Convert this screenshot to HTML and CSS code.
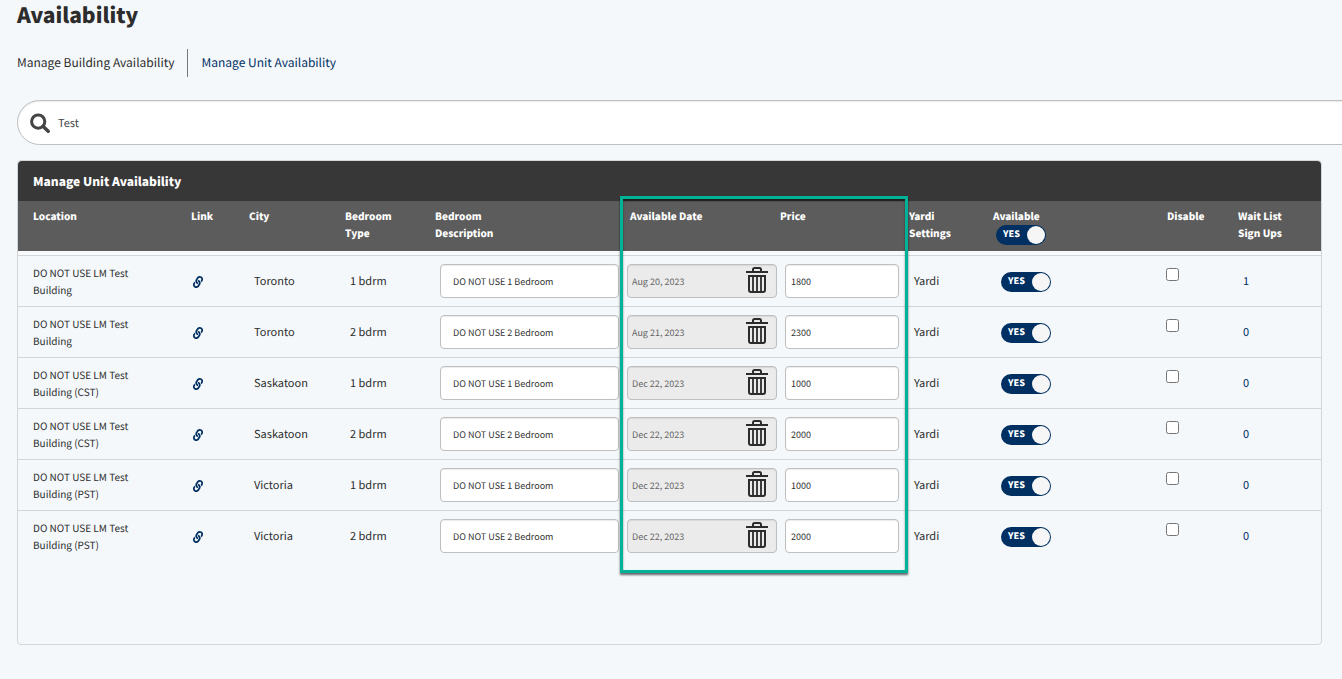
FILE: index.html
```html
<!DOCTYPE html>
<html lang="en">
<head>
    <meta charset="UTF-8">
    <meta name="viewport" content="width=device-width, initial-scale=1.0">
    <title>Availability</title>
    <link rel="stylesheet" href="styles.css">
</head>
<body>
    <svg class="sprite" aria-hidden="true">
        <symbol id="icon-trash" viewBox="0 0 22 26">
            <path d="M7 4V2.6Q7 1 8.6 1h4.8Q15 1 15 2.6V4" fill="none" stroke="currentColor" stroke-width="2"/>
            <path d="M0 4h22v2H0z" fill="currentColor"/>
            <path d="M3 9h16v14q0 2-2 2H5q-2 0-2-2z" fill="none" stroke="currentColor" stroke-width="2"/>
            <path d="M7 9v16M11 9v16M15 9v16" stroke="currentColor" stroke-width="1.8"/>
        </symbol>
        <symbol id="icon-link" viewBox="-20 -20 552 552">
            <path fill="currentColor" transform="rotate(-12 256 256)" d="M326.612 185.391c59.747 59.809 58.927 155.698.36 214.59-.11.12-.24.25-.36.37l-67.2 67.2c-59.27 59.27-155.699 59.262-214.96 0-59.27-59.26-59.27-155.7 0-214.96l37.106-37.106c9.84-9.84 26.786-3.3 27.294 10.606.648 17.722 3.826 35.527 9.69 52.721 1.986 5.822.567 12.262-3.783 16.612l-13.087 13.087c-28.026 28.026-28.905 73.66-1.155 101.96 28.024 28.579 74.086 28.749 102.325.51l67.2-67.19c28.191-28.191 28.073-73.757 0-101.83-3.701-3.694-7.429-6.564-10.341-8.569a16.037 16.037 0 0 1-6.947-12.606c-.396-10.567 3.348-21.456 11.698-29.806l21.054-21.055c5.521-5.521 14.182-6.199 20.584-1.731a152.482 152.482 0 0 1 20.522 17.197zM467.547 44.449c-59.261-59.262-155.69-59.27-214.96 0l-67.2 67.2c-.12.12-.25.25-.36.37-58.566 58.892-59.387 154.781.36 214.59a152.454 152.454 0 0 0 20.521 17.196c6.402 4.468 15.064 3.789 20.584-1.731l21.054-21.055c8.35-8.35 12.094-19.239 11.698-29.806a16.037 16.037 0 0 0-6.947-12.606c-2.912-2.005-6.64-4.875-10.341-8.569-28.073-28.073-28.191-73.639 0-101.83l67.2-67.19c28.239-28.239 74.3-28.069 102.325.51 27.75 28.3 26.872 73.934-1.155 101.96l-13.087 13.087c-4.35 4.35-5.769 10.79-3.783 16.612 5.864 17.194 9.042 34.999 9.69 52.721.509 13.906 17.454 20.446 27.294 10.606l37.106-37.106c59.271-59.259 59.271-155.699.001-214.959z"/>
        </symbol>
    </svg>

    <div class="page">
        <h1>Availability</h1>

        <nav class="tabs">
            <a href="#building">Manage Building Availability</a>
            <a href="#unit" class="active">Manage Unit Availability</a>
        </nav>

        <div class="search">
            <svg class="search-icon" viewBox="0 0 20 20" aria-hidden="true">
                <circle cx="8.2" cy="8.6" r="6.6" fill="none" stroke="currentColor" stroke-width="3"/>
                <path d="M13.2 13.4l5 4.8" stroke="currentColor" stroke-width="3.4" stroke-linecap="round"/>
            </svg>
            <input type="text" value="Test" aria-label="Search">
        </div>

        <section class="panel">
            <h2>Manage Unit Availability</h2>
            <table class="units">
                <colgroup>
                    <col class="col-location">
                    <col class="col-link">
                    <col class="col-city">
                    <col class="col-type">
                    <col class="col-description">
                    <col class="col-date">
                    <col class="col-price">
                    <col class="col-yardi">
                    <col class="col-available">
                    <col class="col-disable">
                    <col class="col-waitlist">
                </colgroup>
                <thead>
                    <tr>
                        <th class="location">Location</th>
                        <th class="link">Link</th>
                        <th>City</th>
                        <th>Bedroom<br>Type</th>
                        <th>Bedroom<br>Description</th>
                        <th class="date">Available Date</th>
                        <th>Price</th>
                        <th>Yardi<br>Settings</th>
                        <th class="available">Available
                            <label class="toggle"><input type="checkbox" checked aria-label="All available"><span>YES</span></label>
                        </th>
                        <th class="disable">Disable</th>
                        <th>Wait List<br>Sign Ups</th>
                    </tr>
                </thead>
                <tbody>
                    <tr>
                        <td class="location">DO NOT USE LM Test Building</td>
                        <td class="link"><a href="#unit-1" aria-label="Open unit"><svg><use href="#icon-link"/></svg></a></td>
                        <td>Toronto</td>
                        <td>1 bdrm</td>
                        <td class="entry"><input class="field description" type="text" value="DO NOT USE 1 Bedroom" aria-label="Bedroom description"></td>
                        <td class="entry"><div class="date-box"><input class="field" type="text" value="Aug 20, 2023" readonly aria-label="Available date"><button type="button" aria-label="Clear date"><svg><use href="#icon-trash"/></svg></button></div></td>
                        <td class="entry price"><input class="field" type="text" value="1800" aria-label="Price"></td>
                        <td>Yardi</td>
                        <td class="available"><label class="toggle"><input type="checkbox" checked aria-label="Available"><span>YES</span></label></td>
                        <td class="disable"><input type="checkbox" aria-label="Disable"></td>
                        <td><a href="#waitlist-1">1</a></td>
                    </tr>
                    <tr>
                        <td class="location">DO NOT USE LM Test Building</td>
                        <td class="link"><a href="#unit-2" aria-label="Open unit"><svg><use href="#icon-link"/></svg></a></td>
                        <td>Toronto</td>
                        <td>2 bdrm</td>
                        <td class="entry"><input class="field description" type="text" value="DO NOT USE 2 Bedroom" aria-label="Bedroom description"></td>
                        <td class="entry"><div class="date-box"><input class="field" type="text" value="Aug 21, 2023" readonly aria-label="Available date"><button type="button" aria-label="Clear date"><svg><use href="#icon-trash"/></svg></button></div></td>
                        <td class="entry price"><input class="field" type="text" value="2300" aria-label="Price"></td>
                        <td>Yardi</td>
                        <td class="available"><label class="toggle"><input type="checkbox" checked aria-label="Available"><span>YES</span></label></td>
                        <td class="disable"><input type="checkbox" aria-label="Disable"></td>
                        <td><a href="#waitlist-2">0</a></td>
                    </tr>
                    <tr>
                        <td class="location">DO NOT USE LM Test Building (CST)</td>
                        <td class="link"><a href="#unit-3" aria-label="Open unit"><svg><use href="#icon-link"/></svg></a></td>
                        <td>Saskatoon</td>
                        <td>1 bdrm</td>
                        <td class="entry"><input class="field description" type="text" value="DO NOT USE 1 Bedroom" aria-label="Bedroom description"></td>
                        <td class="entry"><div class="date-box"><input class="field" type="text" value="Dec 22, 2023" readonly aria-label="Available date"><button type="button" aria-label="Clear date"><svg><use href="#icon-trash"/></svg></button></div></td>
                        <td class="entry price"><input class="field" type="text" value="1000" aria-label="Price"></td>
                        <td>Yardi</td>
                        <td class="available"><label class="toggle"><input type="checkbox" checked aria-label="Available"><span>YES</span></label></td>
                        <td class="disable"><input type="checkbox" aria-label="Disable"></td>
                        <td><a href="#waitlist-3">0</a></td>
                    </tr>
                    <tr>
                        <td class="location">DO NOT USE LM Test Building (CST)</td>
                        <td class="link"><a href="#unit-4" aria-label="Open unit"><svg><use href="#icon-link"/></svg></a></td>
                        <td>Saskatoon</td>
                        <td>2 bdrm</td>
                        <td class="entry"><input class="field description" type="text" value="DO NOT USE 2 Bedroom" aria-label="Bedroom description"></td>
                        <td class="entry"><div class="date-box"><input class="field" type="text" value="Dec 22, 2023" readonly aria-label="Available date"><button type="button" aria-label="Clear date"><svg><use href="#icon-trash"/></svg></button></div></td>
                        <td class="entry price"><input class="field" type="text" value="2000" aria-label="Price"></td>
                        <td>Yardi</td>
                        <td class="available"><label class="toggle"><input type="checkbox" checked aria-label="Available"><span>YES</span></label></td>
                        <td class="disable"><input type="checkbox" aria-label="Disable"></td>
                        <td><a href="#waitlist-4">0</a></td>
                    </tr>
                    <tr>
                        <td class="location">DO NOT USE LM Test Building (PST)</td>
                        <td class="link"><a href="#unit-5" aria-label="Open unit"><svg><use href="#icon-link"/></svg></a></td>
                        <td>Victoria</td>
                        <td>1 bdrm</td>
                        <td class="entry"><input class="field description" type="text" value="DO NOT USE 1 Bedroom" aria-label="Bedroom description"></td>
                        <td class="entry"><div class="date-box"><input class="field" type="text" value="Dec 22, 2023" readonly aria-label="Available date"><button type="button" aria-label="Clear date"><svg><use href="#icon-trash"/></svg></button></div></td>
                        <td class="entry price"><input class="field" type="text" value="1000" aria-label="Price"></td>
                        <td>Yardi</td>
                        <td class="available"><label class="toggle"><input type="checkbox" checked aria-label="Available"><span>YES</span></label></td>
                        <td class="disable"><input type="checkbox" aria-label="Disable"></td>
                        <td><a href="#waitlist-5">0</a></td>
                    </tr>
                    <tr>
                        <td class="location">DO NOT USE LM Test Building (PST)</td>
                        <td class="link"><a href="#unit-6" aria-label="Open unit"><svg><use href="#icon-link"/></svg></a></td>
                        <td>Victoria</td>
                        <td>2 bdrm</td>
                        <td class="entry"><input class="field description" type="text" value="DO NOT USE 2 Bedroom" aria-label="Bedroom description"></td>
                        <td class="entry"><div class="date-box"><input class="field" type="text" value="Dec 22, 2023" readonly aria-label="Available date"><button type="button" aria-label="Clear date"><svg><use href="#icon-trash"/></svg></button></div></td>
                        <td class="entry price"><input class="field" type="text" value="2000" aria-label="Price"></td>
                        <td>Yardi</td>
                        <td class="available"><label class="toggle"><input type="checkbox" checked aria-label="Available"><span>YES</span></label></td>
                        <td class="disable"><input type="checkbox" aria-label="Disable"></td>
                        <td><a href="#waitlist-6">0</a></td>
                    </tr>
                </tbody>
            </table>
            <div class="highlight"></div>
        </section>
    </div>
</body>
</html>
```
FILE: styles.css
```css
* {
    box-sizing: border-box;
}
body {
    margin: 0;
    background: #f4f8fb;
    color: #2c2c2c;
    font-family: "Source Sans Pro", "Noto Sans CJK SC", sans-serif;
    font-size: 11px;
    line-height: 17px;
    text-rendering: geometricPrecision;
    overflow-x: hidden;
}
a {
    color: #002f62;
    text-decoration: none;
}
input,
button {
    font-family: inherit;
    text-rendering: inherit;
}
.sprite {
    display: none;
}
.page {
    padding: 0 20px 0 17px;
}
h1 {
    margin: 0;
    font-size: 21px;
    font-weight: 900;
    line-height: 31px;
}

/* Tabs */
.tabs {
    display: flex;
    margin-top: 18px;
    font-size: 12px;
    line-height: 28px;
}
.tabs a {
    color: #2c2c2c;
    padding-right: 12px;
}
.tabs a.active {
    color: #002f62;
    padding-left: 14px;
    border-left: 1px solid #777;
}

/* Search bar runs off the right edge */
.search {
    display: flex;
    align-items: center;
    gap: 8px;
    height: 45px;
    margin: 23px -60px 0 0;
    padding: 0 12px;
    background: #fff;
    border: 1px solid #bfbfbf;
    border-radius: 23px;
    box-shadow: inset 0 1px 1px rgba(0, 0, 0, 0.08);
}
.search-icon {
    width: 20px;
    height: 20px;
    color: #444;
}
.search input {
    flex: 1;
    padding: 0;
    border: 0;
    outline: 0;
    background: none;
    color: #444;
    font-size: 11px;
}

/* Panel */
.panel {
    position: relative;
    margin-top: 15px;
    padding-bottom: 83px;
    border: 1px solid #d3d6d8;
    border-radius: 4px;
}
.panel h2 {
    margin: 0;
    padding: 2px 15px 0;
    background: #373737;
    border-radius: 4px 4px 0 0;
    color: #fff;
    font-size: 12px;
    font-weight: 900;
    line-height: 38px;
}
.units {
    width: 100%;
    table-layout: fixed;
    border-collapse: separate;
    border-spacing: 0;
}
.col-location { width: 169px; }
.col-link { width: 62px; }
.col-city { width: 96px; }
.col-type { width: 90px; }
.col-description { width: 187px; }
.col-date { width: 158px; }
.col-price { width: 129px; }
.col-yardi { width: 84px; }
.col-available { width: 168px; }
.col-disable { width: 77px; }
.col-waitlist { width: 83px; }

.units th {
    height: 54px;
    padding: 6px 0 0;
    background: #5c5c5c;
    border-bottom: 4px solid #f8fafc;
    color: #fff;
    font-size: 10px;
    font-weight: 900;
    text-align: left;
    vertical-align: top;
}
.units td {
    padding: 8px 5px;
    border-top: 1px solid #d3d6d8;
    vertical-align: middle;
}
.units .location {
    padding-left: 15px;
    padding-right: 40px;
    font-size: 10px;
}
.units th.link { padding-left: 4px; }
.units th.date { padding-left: 8px; }
.units th.disable { padding-left: 6px; }
.units td.link { padding: 10px 5px 8px; }
.units td.available { padding: 10px 8px 8px; }
.units td.disable {
    padding-top: 12px;
    vertical-align: top;
}
.units td.disable input {
    display: block;
    width: 13px;
    height: 13px;
    margin: 0;
}
.link svg {
    display: block;
    width: 12px;
    height: 12px;
}

/* Fields */
.units td.entry { padding: 8px 3px 8px 5px; }
.units td.price { padding-right: 10px; }
.field {
    display: block;
    width: 100%;
    height: 34px;
    padding: 0 5px;
    background: #fff;
    border: 1px solid #bfbfbf;
    border-radius: 4px;
    box-shadow: inset 0 1px 1px rgba(0, 0, 0, 0.08);
    color: #333;
    font-size: 9px;
}
.field.description {
    padding: 0 12px;
}
.field[readonly] {
    padding: 0 4px;
    background: #ebebeb;
    color: #666;
}
.date-box {
    position: relative;
}
.date-box button {
    position: absolute;
    top: 3px;
    right: 9px;
    padding: 0;
    border: 0;
    background: none;
    color: #2c2c2c;
}
.date-box svg {
    display: block;
    width: 22px;
    height: 26px;
}

/* Toggle */
.toggle {
    position: relative;
    display: block;
    width: 50px;
    height: 20px;
}
th .toggle {
    margin: 1px 0 0 3px;
}
.toggle input {
    position: absolute;
    margin: 0;
    opacity: 0;
}
.toggle span {
    display: flex;
    justify-content: space-between;
    height: 20px;
    padding: 0 1px 0 7px;
    background: #002f62;
    border-radius: 10px;
    color: #fff;
    font-size: 9px;
    font-weight: 900;
    line-height: 18px;
}
.toggle span::after {
    content: "";
    width: 18px;
    height: 18px;
    margin-top: 1px;
    background: #f6f6f6;
    border-radius: 50%;
}

/* Frame round the date and price columns */
.highlight {
    position: absolute;
    top: 35px;
    bottom: 71px;
    left: 602px;
    width: 288px;
    border: 3px solid #00b398;
    box-shadow: 0 2px 2px rgba(0, 0, 0, 0.6), inset 0 2px 2px rgba(0, 0, 0, 0.5);
    pointer-events: none;
}
```
